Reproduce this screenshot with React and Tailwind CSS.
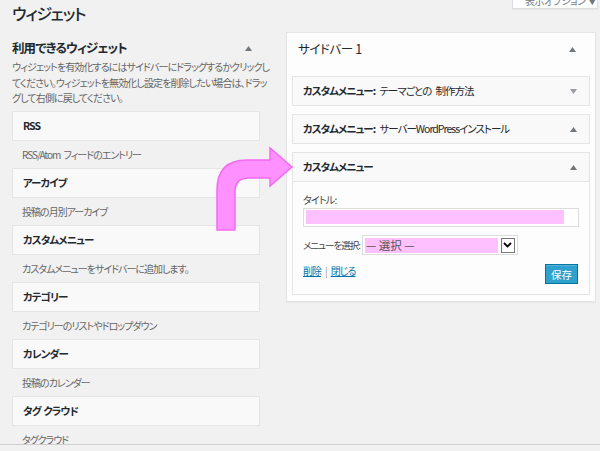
import React from "react";

const jp = "font-['Noto_Sans_CJK_JP','Noto_Sans',sans-serif] [font-feature-settings:'palt']";

const available = [
  { name: "RSS", desc: "RSS/Atom フィードのエントリー" },
  { name: "アーカイブ", desc: "投稿の月別アーカイブ" },
  { name: "カスタムメニュー", desc: "カスタムメニューをサイドバーに追加します。" },
  { name: "カテゴリー", desc: "カテゴリーのリストやドロップダウン" },
  { name: "カレンダー", desc: "投稿のカレンダー" },
  { name: "タグ クラウド", desc: "タグクラウド" },
];

const Up = () => (
  <svg width="7" height="5" viewBox="0 0 7 5" className="fill-[#72777c]">
    <path d="M0 5 L3.5 0 L7 5 Z" />
  </svg>
);

const Down = () => (
  <svg width="7" height="5" viewBox="0 0 7 5" className="fill-[#9a9ea3]">
    <path d="M0 0 L3.5 5 L7 0 Z" />
  </svg>
);

function WidgetTile({ name, desc }) {
  return (
    <div>
      <div className="h-[30px] border border-[#e5e5e5] bg-[#f9f9f9] flex items-center pl-[10px] text-[10.5px] tracking-[-0.9px] [word-spacing:1px] font-bold text-[#23282d] whitespace-pre">
        {name}
      </div>
      <div className="h-[27px] flex items-center pl-[10px] text-[10px] tracking-[-1px] [word-spacing:2px] text-[#666] whitespace-pre">{desc}</div>
    </div>
  );
}

function SideWidget({ title, sub, open }) {
  return (
    <div className="h-[30px] border border-[#e5e5e5] bg-[#f9f9f9] flex items-center justify-between pl-[10px] pr-[12px]">
      <span className="text-[10.5px] tracking-[-1px] [word-spacing:3px] font-bold text-[#23282d] whitespace-pre">
        {title}
        <span className="font-normal">{sub}</span>
      </span>
      {open ? <Up /> : <Down />}
    </div>
  );
}

export default function App() {
  return (
    <div className={`${jp} relative w-[600px] h-[451px] overflow-hidden bg-[#f1f1f1]`}>
      <div className="absolute top-0 left-[512px] w-[86px] h-[9px] overflow-hidden bg-white border border-t-0 border-[#ddd] shadow-[0_1px_1px_rgba(0,0,0,0.04)]">
        <div className="-mt-[7px] pl-[12px] text-[10px] tracking-[-0.5px] text-[#72777c] whitespace-nowrap">表示オプション ▼</div>
      </div>

      <div className="h-[444px] overflow-hidden">
        <h1 className="pt-[1px] pl-[12px] text-[16px] font-medium tracking-[-1.2px] leading-[24px] text-[#23282d]">ウィジェット</h1>

        <div className="flex items-start mt-[7px]">
          <div className="w-[248px] ml-[12px]">
            <div className="h-[20px] mt-[6px] flex items-center justify-between pr-[8px]">
              <span className="text-[12.5px] tracking-[-0.9px] font-bold text-[#23282d]">利用できるウィジェット</span>
              <Up />
            </div>
            <p className="mt-[1px] text-[10px] tracking-[-0.9px] leading-[15.5px] text-[#666] whitespace-nowrap">
              ウィジェットを有効化するにはサイドバーにドラッグするかクリックし
              <br />
              てください。ウィジェットを無効化し設定を削除したい場合は、ドラッ
              <br />
              グして右側に戻してください。
            </p>
            <div className="mt-[5px]">
              {available.map((w) => (
                <WidgetTile key={w.name} {...w} />
              ))}
            </div>
          </div>

          <div className="w-[310px] ml-[26px] border border-[#e5e5e5] bg-[#fdfdfd] px-[5px] pb-[6px] shadow-[0_1px_1px_rgba(0,0,0,0.04)]">
            <div className="h-[43px] pb-[10px] flex items-center justify-between pl-[6px] pr-[14px]">
              <span className="text-[12.5px] tracking-[-0.4px] text-[#23282d]">サイドバー 1</span>
              <Up />
            </div>
            <div className="flex flex-col gap-[8px]">
              <SideWidget title="カスタムメニュー:" sub=" テーマごとの 制作方法" />
              <SideWidget title="カスタムメニュー:" sub=" サーバーWordPressインストール" open />
              <div className="border border-[#e5e5e5] bg-[#fdfdfd]">
                <div className="h-[29px] border-b border-[#e5e5e5] bg-[#f9f9f9] flex items-center justify-between pl-[10px] pr-[12px]">
                  <span className="text-[10.5px] tracking-[-1px] font-bold text-[#23282d]">カスタムメニュー</span>
                  <Up />
                </div>
                <div className="pl-[10px] pr-[10px] pt-[9px] pb-[10px] text-[10px] tracking-[-0.8px] text-[#444]">
                  <div className="leading-[17px]">タイトル:</div>
                  <div className="w-[276px] h-[19px] border border-[#ddd] bg-white pl-[2px] pt-[1px]">
                    <div className="w-[258px] h-[14px] bg-[#ffc0ff]" />
                  </div>
                  <div className="flex items-center mt-[8px]">
                    <span className="mr-[2px] shrink-0 whitespace-nowrap text-[9.5px] tracking-[-1px]">メニューを選択:</span>
                    <div className="w-[156px] h-[20px] border border-[#ddd] bg-white flex items-center pl-[2px] pr-[2px]">
                      <div className="w-[133px] h-[15px] bg-[#ffc0ff] text-[#555] text-[11.5px] tracking-normal leading-[15px] pl-[1px]">— 選択 —</div>
                      <div className="ml-auto w-[14px] h-[15px] border border-[#777] bg-white flex items-center justify-center">
                        <svg width="9" height="6" viewBox="0 0 9 6">
                          <path d="M1 1 L4.5 4.5 L8 1" stroke="#000" strokeWidth="1.8" fill="none" />
                        </svg>
                      </div>
                    </div>
                  </div>
                  <div className="flex items-start justify-between mt-[9px]">
                    <div className="text-[10px] leading-[14px] tracking-[-1px]">
                      <span className="text-[#0073aa] underline">削除</span>
                      <span className="text-[#999] mx-[4px]">|</span>
                      <span className="text-[#0073aa] underline">閉じる</span>
                    </div>
                    <button className="w-[33px] h-[20px] mr-[1px] bg-[#2ea2cc] border border-[#0074a2] text-white text-[10.5px] tracking-normal leading-[17px] shadow-[inset_0_1px_0_rgba(120,200,230,0.5)]">
                      保存
                    </button>
                  </div>
                </div>
              </div>
            </div>
          </div>
        </div>
      </div>
      <div className="border-t border-[#cfcfcf] h-[7px] bg-[#f1f1f1]" />

      <svg
        className="absolute left-[210px] top-[142px] pointer-events-none"
        width="90"
        height="95"
        viewBox="210 142 90 95"
      >
        <path
          d="M217 230 L217 190 Q217 160 247 160 L270 160 L270 148 L292 167 L270 186 L270 178 L249 178 Q235 178 235 192 L235 230 Z"
          fill="#ff90ff"
          stroke="#f36af0"
          strokeWidth="1.5"
          strokeLinejoin="miter"
        />
      </svg>
    </div>
  );
}
